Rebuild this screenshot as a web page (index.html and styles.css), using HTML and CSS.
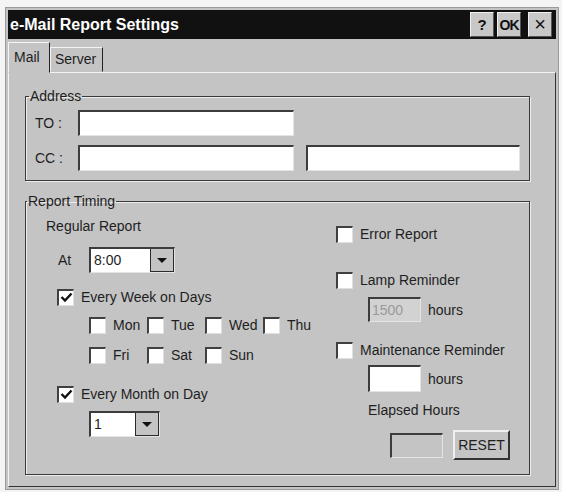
FILE: index.html
```html
<!DOCTYPE html>
<html lang="en">
<head>
    <meta charset="UTF-8">
    <title>e-Mail Report Settings</title>
    <link rel="stylesheet" href="styles.css">
</head>
<body>
    <div class="window">
        <div class="titlebar">
            <span class="title">e-Mail Report Settings</span>
            <div class="title-buttons">
                <span class="tbtn">?</span>
                <span class="tbtn ok">OK</span>
                <span class="tbtn close">&times;</span>
            </div>
        </div>

        <div class="tabs">
            <div class="tab active">Mail</div>
            <div class="tab">Server</div>
        </div>

        <div class="panel">
            <fieldset class="group address">
                <legend>Address</legend>
                <div class="addr-row">
                    <span class="addr-label">TO :</span>
                    <span class="field wide"></span>
                </div>
                <div class="addr-row">
                    <span class="addr-label">CC :</span>
                    <span class="field wide"></span>
                    <span class="field wide2"></span>
                </div>
            </fieldset>

            <fieldset class="group timing">
                <legend>Report Timing</legend>
                <div class="timing-grid">
                    <div class="col">
                        <div class="text-row">Regular Report</div>
                        <div class="row at-row">
                            <span class="at-label">At</span>
                            <span class="combo time">
                                <span class="combo-value">8:00</span>
                                <span class="combo-btn"><span class="arrow"></span></span>
                            </span>
                        </div>
                        <div class="row check-row week">
                            <span class="check"><svg width="13" height="13" viewBox="0 0 13 13"><path d="M1.5 6 L5 9.5 L11.5 2.5" fill="none" stroke="#111" stroke-width="2.4"/></svg></span>
                            Every Week on Days
                        </div>
                        <div class="days">
                            <div class="row"><span class="check"></span>Mon</div>
                            <div class="row"><span class="check"></span>Tue</div>
                            <div class="row"><span class="check"></span>Wed</div>
                            <div class="row"><span class="check"></span>Thu</div>
                            <div class="row"><span class="check"></span>Fri</div>
                            <div class="row"><span class="check"></span>Sat</div>
                            <div class="row"><span class="check"></span>Sun</div>
                        </div>
                        <div class="row check-row month">
                            <span class="check"><svg width="13" height="13" viewBox="0 0 13 13"><path d="M1.5 6 L5 9.5 L11.5 2.5" fill="none" stroke="#111" stroke-width="2.4"/></svg></span>
                            Every Month on Day
                        </div>
                        <div class="row day-row">
                            <span class="combo day">
                                <span class="combo-value">1</span>
                                <span class="combo-btn"><span class="arrow"></span></span>
                            </span>
                        </div>
                    </div>

                    <div class="col">
                        <div class="row check-row error"><span class="check"></span>Error Report</div>
                        <div class="row check-row lamp"><span class="check"></span>Lamp Reminder</div>
                        <div class="row hours-row lamp-hours">
                            <span class="field small disabled">1500</span>
                            <span class="hours">hours</span>
                        </div>
                        <div class="row check-row maint"><span class="check"></span>Maintenance Reminder</div>
                        <div class="row hours-row maint-hours">
                            <span class="field small tall"></span>
                            <span class="hours">hours</span>
                        </div>
                        <div class="text-row elapsed-label">Elapsed Hours</div>
                        <div class="row elapsed-row">
                            <span class="field small readonly"></span>
                            <span class="button">RESET</span>
                        </div>
                    </div>
                </div>
            </fieldset>
        </div>
    </div>
</body>
</html>
```

FILE: styles.css
```css
body {
    margin: 0;
    background-color: #f4f4f4;
    font-family: "Liberation Sans", Arial, sans-serif;
    font-size: 14px;
    color: #1e1e1e;
}

.window {
    margin: 7px 0 0 5px;
    width: 554px;
    height: 483px;
    box-sizing: border-box;
    background-color: #c4c4c4;
    border: 1px solid #9a9a9a;
    padding: 2px;
    display: flex;
    flex-direction: column;
}

/* title bar */
.titlebar {
    height: 29px;
    flex-shrink: 0;
    background-color: #111;
    display: flex;
    align-items: center;
    justify-content: space-between;
    padding: 0 4px 0 2px;
}

.title {
    color: #fff;
    font-weight: bold;
    font-size: 16px;
}

.title-buttons {
    display: flex;
    gap: 3px;
}

.tbtn {
    width: 24px;
    height: 25px;
    box-sizing: border-box;
    background-color: #c8c8c8;
    border: 1px solid;
    border-color: #f0f0f0 #555 #555 #f0f0f0;
    display: flex;
    align-items: center;
    justify-content: center;
    font-weight: bold;
    font-size: 15px;
    color: #111;
}

.tbtn.ok {
    font-size: 14px;
    letter-spacing: -1px;
}

.tbtn.close {
    margin-left: 4px;
    font-weight: normal;
    font-size: 20px;
}

/* tabs */
.tabs {
    height: 33px;
    flex-shrink: 0;
    display: flex;
    align-items: flex-end;
}

.tab {
    height: 25px;
    line-height: 23px;
    box-sizing: border-box;
    padding: 0 6px 0 4px;
    border: 1px solid;
    border-color: #f4f4f4 #222 transparent #f4f4f4;
}

.tab.active {
    height: 31px;
    line-height: 28px;
    width: 42px;
    padding: 0 0 0 5px;
    margin-bottom: -1px;
    background-color: #c4c4c4;
    position: relative;
    z-index: 1;
}

.panel {
    flex: 1;
    border: 1px solid;
    border-color: #f4f4f4 #333 #333 #f4f4f4;
    padding: 15px 0 0 16px;
}

/* group boxes */
.group {
    margin: 0;
    width: 505px;
    box-sizing: border-box;
    border: 1px solid #3a3a3a;
    box-shadow: 1px 1px 0 #ececec, inset 1px 1px 0 #ececec;
}

.group legend {
    padding: 0 1px;
    line-height: 16px;
}

.address {
    padding: 6px 0 9px 9px;
}

.address legend {
    margin-left: -6px;
}

.addr-row {
    display: flex;
    align-items: center;
    height: 26px;
}

.addr-row + .addr-row {
    margin-top: 9px;
}

.addr-label {
    width: 43px;
}

.field {
    display: block;
    height: 26px;
    box-sizing: border-box;
    background-color: #fff;
    border-style: solid;
    border-width: 2px 1px 1px 2px;
    border-color: #3c3c3c #e4e4e4 #e4e4e4 #3c3c3c;
}

.field.wide {
    width: 216px;
}

.field.wide2 {
    width: 214px;
    margin-left: 12px;
}

.timing {
    margin-top: 12px;
    padding: 9px 0 14px 20px;
}

.timing legend {
    margin-left: -19px;
}

.timing-grid {
    display: grid;
    grid-template-columns: 290px 1fr;
}

.col {
    display: flex;
    flex-direction: column;
}

.row {
    display: flex;
    align-items: center;
}

.text-row {
    line-height: 16px;
}

.check {
    width: 17px;
    height: 17px;
    flex-shrink: 0;
    box-sizing: border-box;
    background-color: #fff;
    border-style: solid;
    border-width: 2px 1px 1px 2px;
    border-color: #404040 #e0e0e0 #e0e0e0 #404040;
    margin-right: 7px;
    display: flex;
    align-items: center;
    justify-content: center;
}

.check-row {
    height: 18px;
}

.at-row {
    margin-top: 13px;
    padding-left: 12px;
}

.at-label {
    width: 31px;
}

.combo {
    display: flex;
    height: 26px;
    box-sizing: border-box;
    background-color: #fff;
    border-style: solid;
    border-width: 2px 1px 1px 2px;
    border-color: #3c3c3c #e4e4e4 #e4e4e4 #3c3c3c;
}

.combo.time {
    width: 86px;
}

.combo.day {
    width: 71px;
}

.combo-value {
    flex: 1;
    padding-left: 3px;
    line-height: 23px;
}

.combo-btn {
    width: 22px;
    background-color: #c4c4c4;
    border: 1px solid #2a2a2a;
    border-top: none;
    display: flex;
    align-items: center;
    justify-content: center;
}

.arrow {
    width: 0;
    height: 0;
    border-left: 5px solid transparent;
    border-right: 5px solid transparent;
    border-top: 5px solid #111;
}

.week {
    margin-top: 15px;
    padding-left: 11px;
}

.days {
    margin-top: 10px;
    margin-left: 43px;
    display: grid;
    grid-template-columns: repeat(4, 58px);
    grid-auto-rows: 18px;
    row-gap: 12px;
}

.month {
    margin-top: 21px;
    padding-left: 11px;
}

.day-row {
    margin-top: 8px;
    padding-left: 43px;
}

/* right column */
.error {
    margin-top: 7px;
}

.lamp {
    margin-top: 28px;
}

.hours-row {
    padding-left: 32px;
}

.lamp-hours {
    margin-top: 8px;
}

.field.small {
    width: 53px;
    height: 25px;
    line-height: 22px;
    padding-left: 2px;
}

.field.tall {
    height: 27px;
}

.field.disabled {
    background-color: #d2d2d2;
    color: #9a9a9a;
}

.field.readonly {
    background-color: #c4c4c4;
}

.hours {
    margin-left: 7px;
}

.maint {
    margin-top: 19px;
}

.maint-hours {
    margin-top: 6px;
}

.elapsed-label {
    margin-top: 10px;
    padding-left: 32px;
}

.elapsed-row {
    margin-top: 12px;
    padding-left: 54px;
}

.button {
    width: 57px;
    height: 30px;
    margin-left: 10px;
    box-sizing: border-box;
    border: 2px solid;
    border-color: #f0f0f0 #333 #333 #f0f0f0;
    display: flex;
    align-items: center;
    justify-content: center;
}
```
